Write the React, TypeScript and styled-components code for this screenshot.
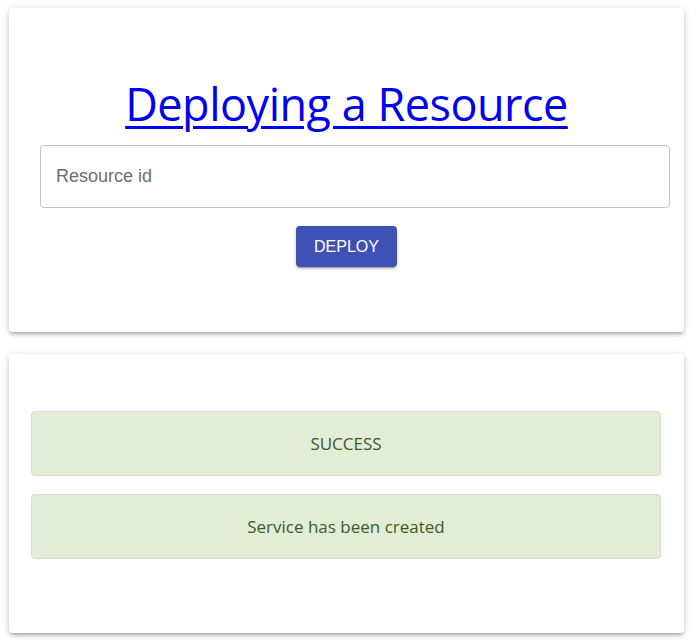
import React from "react";
import styled, { createGlobalStyle } from "styled-components";

const Global = createGlobalStyle`
  html, body { margin: 0; padding: 0; background: #ffffff; }
  body { font-family: "Open Sans", "Noto Sans", sans-serif; }
`;

const Page = styled.div`
  display: flex;
  flex-direction: column;
  gap: 22px;
  padding: 8px 13px 8px 9px;
`;

const Card = styled.section`
  background: #fff;
  border-radius: 4px;
  box-shadow: 0px 3px 3px -2px rgba(0,0,0,0.2), 0px 3px 4px 0px rgba(0,0,0,0.14), 0px 1px 8px 0px rgba(0,0,0,0.12);
  display: flex;
  flex-direction: column;
`;

const DeployCard = styled(Card)`
  height: 324px;
  box-sizing: border-box;
  padding: 66px 14px 0 31px;
  align-items: center;
`;

const Title = styled.a`
  font-family: "Open Sans", "Noto Sans", sans-serif;
  font-size: 45px;
  line-height: 60px;
  color: #0000ee;
  text-decoration: underline;
  text-decoration-thickness: 3px;
  text-underline-offset: 5px;
  letter-spacing: -0.5px;
  margin: 0 17px 11px 0;
`;

const Input = styled.input`
  box-sizing: border-box;
  width: 100%;
  height: 63px;
  border: 1px solid #c4c4c4;
  border-radius: 4px;
  padding: 0 15px;
  font-family: "Liberation Sans", Arial, sans-serif;
  font-size: 18px;
  color: #333;
  outline: none;
  &::placeholder { color: #6f6f6f; }
`;

const Button = styled.button`
  margin-top: 18px;
  margin-right: 17px;
  height: 41px;
  padding: 0 18px;
  background: #3f51b5;
  color: #fff;
  border: none;
  border-radius: 4px;
  font-family: "Liberation Sans", Arial, sans-serif;
  font-size: 16px;
  text-transform: uppercase;
  box-shadow: 0px 3px 1px -2px rgba(0,0,0,0.2), 0px 2px 2px 0px rgba(0,0,0,0.14), 0px 1px 5px 0px rgba(0,0,0,0.12);
  cursor: pointer;
`;

const ResultCard = styled(Card)`
  height: 279px;
  box-sizing: border-box;
  padding: 57px 23px 0 22px;
  gap: 18px;
`;

const Alert = styled.div`
  height: 65px;
  box-sizing: border-box;
  background: #e3ecd6;
  border: 1px solid #d3e2c2;
  border-radius: 4px;
  display: flex;
  align-items: center;
  justify-content: center;
  font-family: "Open Sans", "Noto Sans", sans-serif;
  font-size: 17px;
  color: #3e5a23;
`;

export default function App() {
  return (
    <>
      <Global />
      <Page>
        <DeployCard>
          <Title href="#">Deploying a Resource</Title>
          <Input placeholder="Resource id" />
          <Button>Deploy</Button>
        </DeployCard>
        <ResultCard>
          <Alert>SUCCESS</Alert>
          <Alert>Service has been created</Alert>
        </ResultCard>
      </Page>
    </>
  );
}
